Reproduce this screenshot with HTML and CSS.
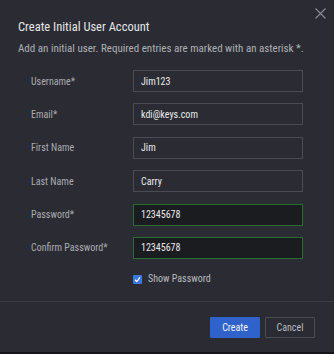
FILE: index.html
```html
<!DOCTYPE html>
<html lang="en">
<head>
    <meta charset="UTF-8">
    <meta name="viewport" content="width=device-width, initial-scale=1.0">
    <title>Create Initial User Account</title>

    <link rel="stylesheet" href="styles.css">
</head>
<body>
    <div class="dialog">
        <button class="close-btn" aria-label="Close">
            <svg width="11" height="11" viewBox="0 0 11 11">
                <path d="M0.5 0.5 L10.5 10.5 M10.5 0.5 L0.5 10.5" stroke="#8c8d94" stroke-width="1.1" fill="none"/>
            </svg>
        </button>

        <div class="dialog-body">
            <h2 class="title">Create Initial User Account</h2>
            <p class="subtitle">Add an initial user. Required entries are marked with an asterisk *.</p>

            <div class="form">
                <div class="row">
                    <label class="label">Username*</label>
                    <input class="field" type="text" value="Jim123">
                </div>
                <div class="row">
                    <label class="label">Email*</label>
                    <input class="field" type="text" value="kdi@keys.com">
                </div>
                <div class="row">
                    <label class="label">First Name</label>
                    <input class="field" type="text" value="Jim">
                </div>
                <div class="row">
                    <label class="label">Last Name</label>
                    <input class="field" type="text" value="Carry">
                </div>
                <div class="row">
                    <label class="label">Password*</label>
                    <input class="field valid" type="text" value="12345678">
                </div>
                <div class="row">
                    <label class="label">Confirm Password*</label>
                    <input class="field valid" type="text" value="12345678">
                </div>
                <div class="row check-row">
                    <span class="label"></span>
                    <label class="check">
                        <span class="box">
                            <svg width="7" height="7" viewBox="0 0 7 7">
                                <path d="M1 3.8 L2.8 5.5 L6 1.4" stroke="#fff" stroke-width="1.2" fill="none"/>
                            </svg>
                        </span>
                        Show Password
                    </label>
                </div>
            </div>
        </div>

        <div class="dialog-footer">
            <button class="btn primary">Create</button>
            <button class="btn secondary">Cancel</button>
        </div>
    </div>
</body>
</html>
```

FILE: styles.css
```css
html, body {
    margin: 0;
    padding: 0;
    background-color: #141518;
}

.dialog {
    position: relative;
    width: 334px;
    height: 352px;
    background-color: #2b2c33;
    font-family: Roboto, "Noto Sans", sans-serif;
    font-stretch: 75%;
    color: #b9bac0;
    display: flex;
    flex-direction: column;
}

.close-btn {
    position: absolute;
    top: 8px;
    right: 8px;
    width: 11px;
    height: 11px;
    padding: 0;
    border: none;
    background: none;
    display: flex;
}

.dialog-body {
    height: 282px;
    padding: 19px 19px 0 18px;
    border-bottom: 1px solid #3a3b43;
}

.title {
    margin: 0;
    font-size: 12.5px;
    font-weight: 400;
    line-height: 16px;
    color: #e4e5e8;
}

.subtitle {
    margin: 7px 0 0 0;
    font-size: 11px;
    line-height: 14px;
    color: #aeafb5;
    white-space: nowrap;
}

.form {
    margin-top: 14px;
    padding-left: 13px;
    display: flex;
    flex-direction: column;
    gap: 11.4px;
}

.row {
    display: flex;
    align-items: center;
    height: 22px;
}

.label {
    width: 102px;
    font-size: 10px;
    color: #aaabb1;
}

.field {
    width: 170px;
    height: 22px;
    box-sizing: border-box;
    border: 1px solid #4a4b53;
    background-color: #2b2c33;
    color: #e8e9ec;
    font-family: Roboto, "Noto Sans", sans-serif;
    font-stretch: 75%;
    font-size: 10px;
    padding: 0 7px;
    outline: none;
}

.field.valid {
    background-color: #1b1c20;
    border-color: #2a6e2f;
}

.check-row {
    height: 12px;
    margin-top: 2px;
}

.check {
    display: flex;
    align-items: center;
    gap: 6px;
    font-size: 10px;
    color: #b9bac0;
}

.box {
    width: 9px;
    height: 9px;
    border-radius: 1px;
    background-color: #3a77de;
    display: flex;
    align-items: center;
    justify-content: center;
    margin-top: 3px;
}

.dialog-footer {
    display: flex;
    justify-content: flex-end;
    gap: 5px;
    padding: 15px 19px 0 0;
}

.btn {
    width: 50px;
    height: 21px;
    padding: 0;
    font-family: Roboto, "Noto Sans", sans-serif;
    font-stretch: 75%;
    font-size: 10px;
    border-radius: 1px;
}

.btn.primary {
    background-color: #2f63cb;
    border: 1px solid #2f63cb;
    color: #f0f2f6;
}

.btn.secondary {
    background-color: #2b2c33;
    border: 1px solid #4a4b53;
    color: #b9bac0;
}
```
